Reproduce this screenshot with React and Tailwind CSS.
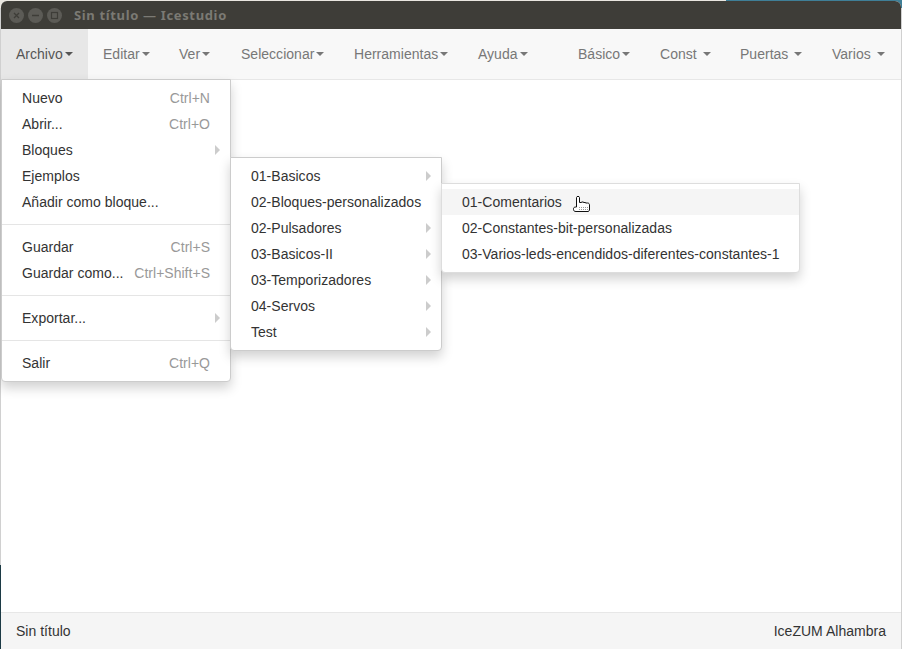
import React from "react";

function Caret() {
  return <span className="inline-block w-0 h-0 ml-[2px] align-middle border-t-[4px] border-x-[4px] border-t-current border-x-transparent" />;
}

function NavItem({ label, spaced, active, className = "" }) {
  return (
    <div className={`h-full flex items-center whitespace-nowrap ${active ? "bg-[#e7e7e7] text-[#555]" : "text-[#777]"} ${className}`}>
      <span className="whitespace-pre">{label}{spaced ? " " : ""}</span>
      <Caret />
    </div>
  );
}

function Arrow() {
  return <span className="absolute right-[10px] top-[8px] w-0 h-0 border-l-[5px] border-y-[5px] border-l-[#ccc] border-y-transparent" />;
}

function Item({ label, shortcut, sub, hover }) {
  return (
    <div className={`relative h-[26px] px-[20px] flex items-center justify-between whitespace-nowrap text-[#333] ${hover ? "bg-[#f5f5f5]" : ""}`}>
      <span>{label}</span>
      {shortcut && <span className="text-[#999] ml-[10px]">{shortcut}</span>}
      {sub && <Arrow />}
    </div>
  );
}

function Divider() {
  return <div className="h-px my-[9px] bg-[#e5e5e5]" />;
}

function Hand() {
  return (
    <svg width="19" height="19" viewBox="0 0 19 19" className="absolute left-[572px] top-[195px]">
      <path
        d="M4.5 2.5 C4.5 1 7.5 1 7.5 2.5 V7.5 H9.5 V7 H11.5 V7.5 H13.5 V8 H15.5 C17 8 17.5 9 17.5 10 V15 L16.5 16.5 H4 C2 16.5 1.5 15.5 1.5 14.5 V13.5 C1.5 12.5 2.5 12 4.5 12 Z"
        fill="#fff"
        stroke="#111"
        strokeWidth="1"
        strokeLinejoin="round"
      />
      <path d="M7 14.5h1M9 14.5h1M11 14.5h1M13 14.5h1M15 14.5h1M7 12.5h1M9 12.5h1M11 12.5h1M13 12.5h1M15 12.5h1" stroke="#999" strokeWidth="1" />
    </svg>
  );
}

export default function App() {
  return (
    <div className="relative w-[902px] h-[649px] overflow-hidden bg-[#d0d0d0] text-[14px] leading-[20px] tracking-[0.02px] font-['Liberation_Sans',Arial,sans-serif]">
      <div className="absolute inset-x-0 top-0 h-[8px] bg-[#e9e6e0]" />
      <div className="absolute left-[726px] right-0 top-0 h-[8px] bg-[#3f7f97]" />
      <div className="absolute left-0 bottom-0 w-[1px] h-[84px] bg-[#1c3a45]" />
      <div className="relative ml-[1px] mr-[1px] mt-px h-[648px] flex flex-col bg-white overflow-hidden rounded-t-[6px]">
        <div className="h-[28px] shrink-0 bg-[#3e3d38] flex items-center pl-[8px]">
          <div className="flex gap-[4px]">
            <div className="w-[15px] h-[15px] rounded-full bg-[#5c5b56] flex items-center justify-center">
              <svg width="7" height="7" viewBox="0 0 7 7"><path d="M1 1l5 5M6 1l-5 5" stroke="#3e3d38" strokeWidth="1.3" /></svg>
            </div>
            <div className="w-[15px] h-[15px] rounded-full bg-[#5c5b56] flex items-center justify-center">
              <svg width="9" height="7" viewBox="0 0 9 7"><path d="M1 3.5h7" stroke="#3e3d38" strokeWidth="1.3" /></svg>
            </div>
            <div className="w-[15px] h-[15px] rounded-full bg-[#5c5b56] flex items-center justify-center">
              <svg width="9" height="9" viewBox="0 0 9 9"><rect x="1.5" y="1.5" width="6" height="6" fill="none" stroke="#3e3d38" strokeWidth="1.2" /></svg>
            </div>
          </div>
          <span className="ml-[12px] text-[13px] font-bold tracking-[0.65px] text-[#7b7a74] font-['Noto_Sans',sans-serif]">Sin título — Icestudio</span>
        </div>

        <div className="h-[51px] shrink-0 flex bg-[#f8f8f8] border-b border-[#e7e7e7]">
          <NavItem label="Archivo" active className="w-[87px] pl-[15px]" />
          <NavItem label="Editar" className="w-[76px] pl-[15px]" />
          <NavItem label="Ver" className="w-[62px] pl-[15px]" />
          <NavItem label="Seleccionar" className="w-[113px] pl-[15px]" />
          <NavItem label="Herramientas" className="w-[124px] pl-[15px]" />
          <NavItem label="Ayuda" className="w-[100px] pl-[15px]" />
          <NavItem label="Básico" className="w-[82px] pl-[15px]" />
          <NavItem label="Const" spaced className="w-[80px] pl-[15px]" />
          <NavItem label="Puertas" spaced className="w-[92px] pl-[15px]" />
          <NavItem label="Varios" spaced className="pl-[15px]" />
        </div>

        <div className="flex-1" />

        <div className="h-[37px] shrink-0 bg-[#f5f5f5] border-t border-[#e7e7e7] px-[15px] flex items-center justify-between text-[#333]">
          <span>Sin título</span>
          <span>IceZUM Alhambra</span>
        </div>
      </div>

      <div className="absolute left-[1px] top-[79px] w-[230px] py-[5px] bg-white border border-[#ccc] rounded-b-[4px] shadow-[0_6px_12px_rgba(0,0,0,0.18)]">
        <Item label="Nuevo" shortcut="Ctrl+N" />
        <Item label="Abrir..." shortcut="Ctrl+O" />
        <Item label="Bloques" sub />
        <Item label="Ejemplos" />
        <Item label="Añadir como bloque..." />
        <Divider />
        <Item label="Guardar" shortcut="Ctrl+S" />
        <Item label="Guardar como..." shortcut="Ctrl+Shift+S" />
        <Divider />
        <Item label="Exportar..." sub />
        <Divider />
        <Item label="Salir" shortcut="Ctrl+Q" />
      </div>

      <div className="absolute left-[230px] top-[157px] w-[212px] py-[5px] bg-white border border-[#ccc] rounded-b-[4px] shadow-[0_6px_12px_rgba(0,0,0,0.18)]">
        <Item label="01-Basicos" sub />
        <Item label="02-Bloques-personalizados" />
        <Item label="02-Pulsadores" sub />
        <Item label="03-Basicos-II" sub />
        <Item label="03-Temporizadores" sub />
        <Item label="04-Servos" sub />
        <Item label="Test" sub />
      </div>

      <div className="absolute left-[441px] top-[183px] w-[359px] py-[5px] bg-white border border-[#ddd] rounded-b-[4px] shadow-[0_6px_12px_rgba(0,0,0,0.18)]">
        <Item label="01-Comentarios" hover />
        <Item label="02-Constantes-bit-personalizadas" />
        <Item label="03-Varios-leds-encendidos-diferentes-constantes-1" />
      </div>

      <Hand />
    </div>
  );
}
